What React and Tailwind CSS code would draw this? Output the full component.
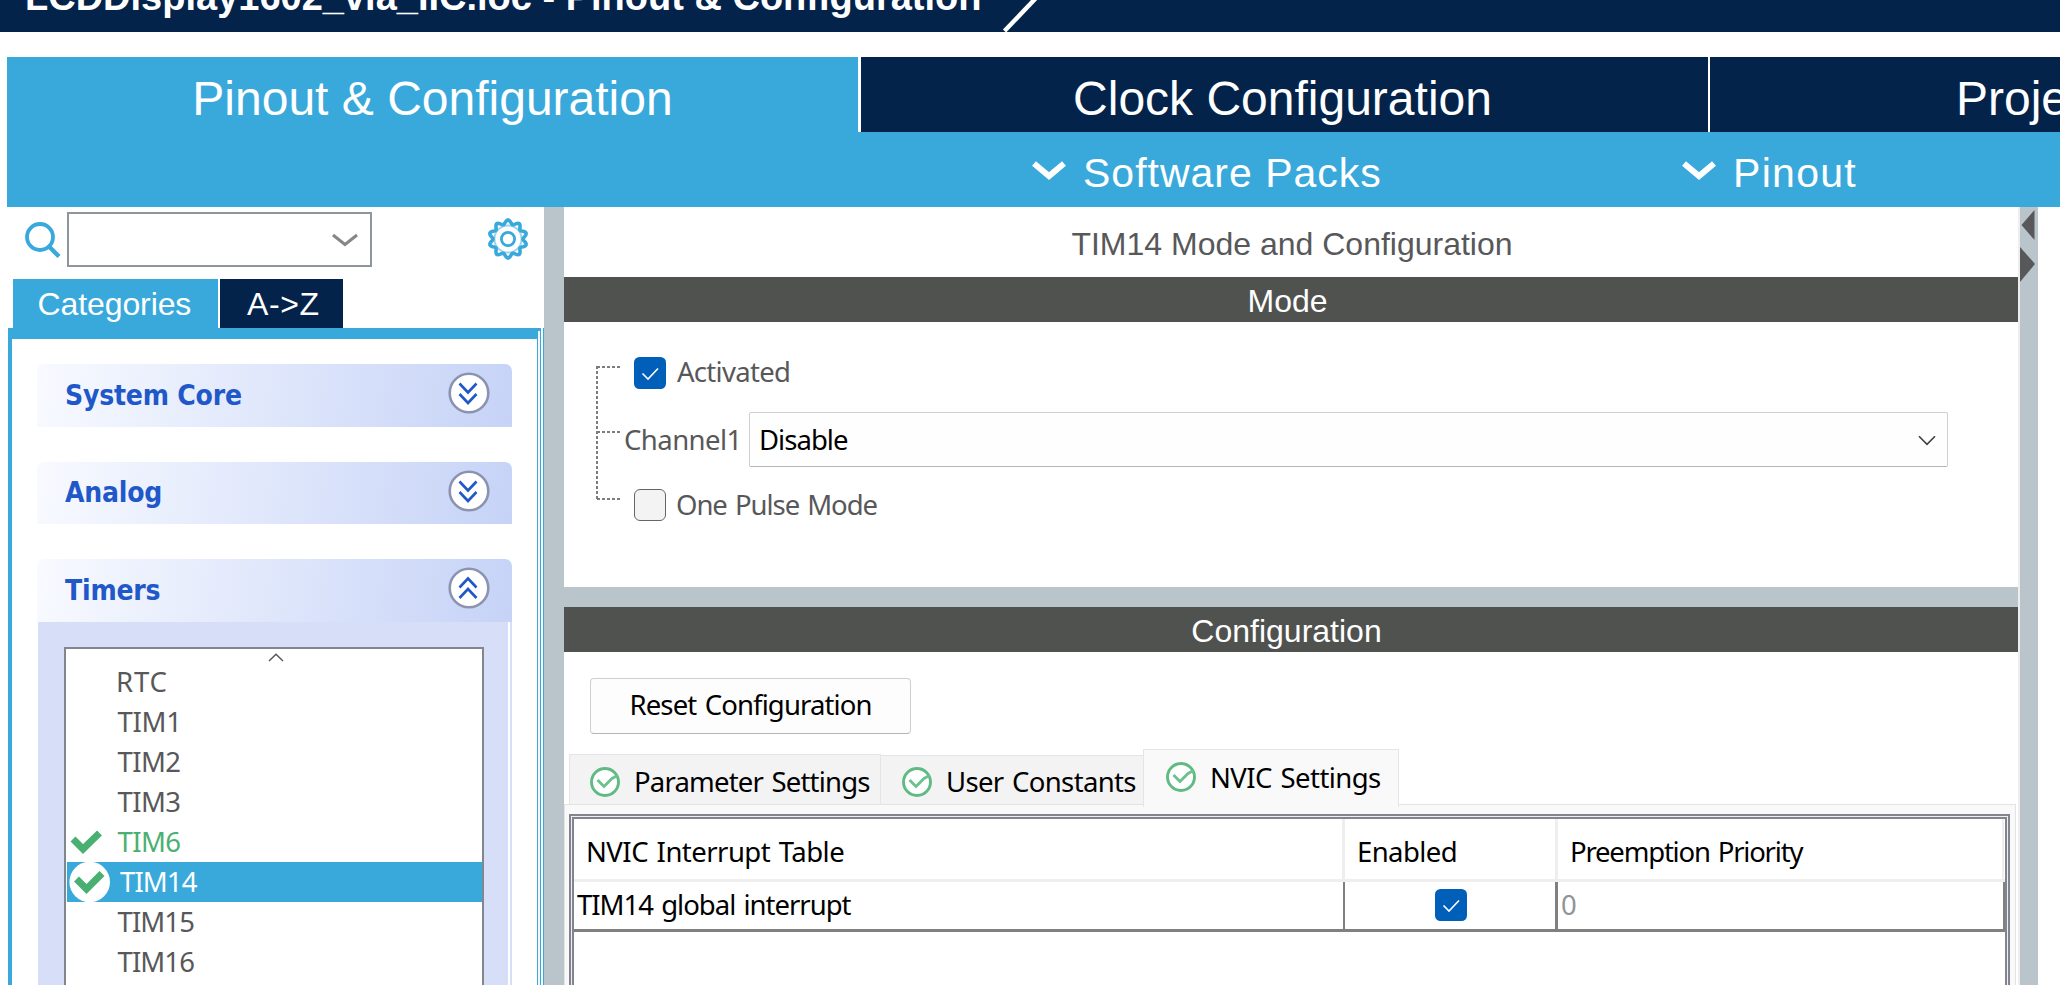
import React from "react";

const ARIAL = "font-['Liberation_Sans',Arial,sans-serif]";
const TAHOMA = "font-['Noto_Sans',Tahoma,sans-serif] text-[27.5px] [word-spacing:2px]";
const TAHOMA_BOLD = "font-['DejaVu_Sans_Condensed','DejaVu_Sans',sans-serif] text-[28px] font-bold -tracking-[0.2px]";

const timers = [
  { name: "RTC", text: "-ml-[1.5px] tracking-[0.8px]" },
  { name: "TIM1", text: "-tracking-[0.3px]" },
  { name: "TIM2", text: "-tracking-[0.6px]" },
  { name: "TIM3", text: "-tracking-[0.6px]" },
  { name: "TIM6", state: "ok", text: "-tracking-[0.6px]" },
  { name: "TIM14", state: "selected", text: "-tracking-[0.9px]" },
  { name: "TIM15", text: "-tracking-[0.9px]" },
  { name: "TIM16", text: "-tracking-[0.9px]" },
];

const gearPath =
  Array.from({ length: 121 }, (_, i) => {
    const a = (i / 120) * Math.PI * 2;
    const r = 17 + 2 * Math.cos(10 * a);
    return `${i ? "L" : "M"}${(21 + r * Math.sin(a)).toFixed(2)} ${(21 - r * Math.cos(a)).toFixed(2)}`;
  }).join("") + "Z";

function MenuChevron() {
  return (
    <svg className="mt-[3px]" width="34" height="20" viewBox="0 0 34 20" fill="none">
      <path d="M2 2.5L17 15L32 2.5" stroke="#fff" strokeWidth="6" />
    </svg>
  );
}

function SectionHeader({ title, open, className, textClass }) {
  return (
    <div
      className={`flex w-[475px] items-start justify-between rounded-t-[7px] bg-[linear-gradient(97deg,#f8faff,#c6d3f7)] pr-[22px] pl-[28px] ${className}`}
    >
      <span className={`${TAHOMA_BOLD} leading-[61px] text-[#2158c9] ${textClass}`}>{title}</span>
      <svg className="mt-[8px]" width="42" height="42" viewBox="0 0 42 42" fill="none">
        <circle cx="21" cy="21" r="19.3" fill="#fff" stroke="#8c93b0" strokeWidth="2.6" />
        {open ? (
          <path d="M11.5 20.5L20 11.5L28.5 20.5M11.5 31L20 22L28.5 31" stroke="#2158c9" strokeWidth="2.6" />
        ) : (
          <path d="M11.5 11.5L20 20.5L28.5 11.5M11.5 22L20 31L28.5 22" stroke="#2158c9" strokeWidth="2.6" />
        )}
      </svg>
    </div>
  );
}

function Checked() {
  return (
    <svg className="shrink-0" width="32" height="32" viewBox="0 0 32 32" fill="none">
      <rect width="32" height="32" rx="5.5" fill="#005fb8" />
      <path d="M8.5 16.5L14 22L24 11.5" stroke="#fff" strokeWidth="1.6" />
    </svg>
  );
}

function StatusIcon() {
  return (
    <svg className="shrink-0" width="30" height="30" viewBox="0 0 30 30" fill="none">
      <circle cx="15" cy="15" r="13.5" fill="#fff" stroke="#5fbb83" strokeWidth="2.9" />
      <path d="M7.5 13L14 19.5L22 11.5L27.5 8.5" stroke="#6cc18d" strokeWidth="2.8" />
    </svg>
  );
}

function TimerRow({ name, state, text }) {
  const selected = state === "selected";
  const color = selected ? "ml-[1px] bg-[#39a9dc] text-white" : state === "ok" ? "text-[#4ab071]" : "text-[#58585a]";
  return (
    <div className={`flex h-[40px] ${color}`}>
      <span className={`flex shrink-0 items-center ${selected ? "w-[53px] pl-[2px]" : "w-[51.5px] pl-[4px]"}`}>
        {selected && (
          <svg width="42" height="40" viewBox="0 0 42 40" fill="none">
            <circle cx="20.7" cy="20" r="20.3" fill="#fff" />
            <path d="M7.5 17L17.5 27L33 11.5" stroke="#4ab071" strokeWidth="7" />
          </svg>
        )}
        {state === "ok" && (
          <svg width="34" height="40" viewBox="0 0 34 40" fill="none">
            <path d="M3 17L13 27L29.5 11" stroke="#4ab071" strokeWidth="7" />
          </svg>
        )}
      </span>
      <span className={`${TAHOMA} leading-[40px] ${text}`}>{name}</span>
    </div>
  );
}

function Sidebar() {
  return (
    <div className="flex w-[544px] shrink-0 flex-col">
      <div className="flex h-[72px] shrink-0 items-start pt-[5px]">
        <svg className="mt-[8px] ml-[24px]" width="38" height="40" viewBox="0 0 38 40" fill="none" stroke="#39a9dc">
          <circle cx="16" cy="17" r="13" strokeWidth="3.8" />
          <path d="M25 26.5L35 36.5" strokeWidth="4.4" />
        </svg>
        <div className="ml-[5px] flex h-[55px] w-[305px] items-center justify-end border-2 border-[#8f959c] pr-[12px]">
          <svg className="mt-[1px]" width="26" height="14" viewBox="0 0 26 14" fill="none">
            <path d="M1 2L13 11.5L25 2" stroke="#868686" strokeWidth="3" />
          </svg>
        </div>
        <svg className="mt-[6px] ml-[114.5px]" width="42" height="42" viewBox="0 0 42 42" fill="none" stroke="#39a9dc">
          <path d={gearPath} strokeWidth="3.6" />
          <circle cx="21" cy="21" r="13.6" strokeWidth="2" opacity="0.5" />
          <circle cx="21" cy="21" r="6.6" strokeWidth="2.8" />
        </svg>
      </div>

      <div className={`ml-[13px] flex h-[49px] shrink-0 gap-[2px] text-[32px] text-white ${ARIAL}`}>
        <div className="w-[205px] bg-[#39a9dc] pl-[24.5px] leading-[50px] -tracking-[0.1px]">Categories</div>
        <div className="w-[123px] bg-[#03234b] pl-[27px] leading-[50px] tracking-[0.6px]">A-&gt;Z</div>
      </div>

      <div className="flex grow pl-[8px]">
        <div className="flex w-[529px] flex-col border-t-[11px] border-l-[4px] border-[#39a9dc] pt-[25px] pl-[25px]">
          <SectionHeader title="System Core" className="h-[63px]" textClass="pt-[1px]" />
          <SectionHeader title="Analog" className="mt-[35px] h-[62px]" />
          <SectionHeader title="Timers" open className="mt-[35px] h-[63px]" textClass="pt-[1px]" />
          <div className="ml-[1px] flex w-[474px] grow bg-[#d6def8]">
            <div className="mt-[25px] ml-[26px] w-[420px] border-x-2 border-t-2 border-[#82868f] bg-white">
              <div className="flex h-[13px] items-end justify-center pl-[3px]">
                <svg width="16" height="9" viewBox="0 0 16 9" fill="none">
                  <path d="M1 8L8 1.2L15 8" stroke="#58585a" strokeWidth="1.5" />
                </svg>
              </div>
              {timers.map((t) => (
                <TimerRow key={t.name} {...t} />
              ))}
            </div>
            <div className="ml-[24px] w-[2px] bg-white" />
          </div>
        </div>
        <div className="flex w-[7px] justify-between">
          <div className="w-[4px] border-x border-t-[3px] border-[#39a9dc] bg-[#f3f7fa]" />
          <div className="w-px bg-[#39a9dc]" />
        </div>
      </div>
    </div>
  );
}

function ModePanel() {
  return (
    <div className="flex h-[265px] shrink-0 pl-[32px]">
      <svg className="shrink-0" width="25" height="200" viewBox="0 0 25 200" fill="none" stroke="#7c7c7c" strokeWidth="2">
        <path d="M1 44V178" strokeDasharray="3 2" />
        <path d="M1 45H24M1 110H24M1 177H24" strokeDasharray="3 2" />
      </svg>
      <div className={`flex flex-col pt-[35px] pl-[2px] text-[#58585a] ${TAHOMA}`}>
        <div className="flex h-[32px] pl-[11px]">
          <Checked />
          <span className="ml-[11px] leading-[30px] -tracking-[0.7px]">Activated</span>
        </div>
        <div className="mt-[23px] flex h-[55px]">
          <span className="w-[126px] pl-[1px] leading-[56px] -tracking-[0.55px]">Channel1</span>
          <div className="flex w-[1199px] items-center justify-between rounded-[2px] border border-[#cfcfcf] border-b-[#b5b5b5] bg-[#fefefe] pr-[11.5px] pl-[9px] text-black">
            <span className="leading-[53px] -tracking-[0.97px]">Disable</span>
            <svg className="mt-[1px]" width="18" height="11" viewBox="0 0 18 11" fill="none">
              <path d="M1 1.2L9 9.4L17 1.2" stroke="#404040" strokeWidth="1.6" />
            </svg>
          </div>
        </div>
        <div className="mt-[22px] flex h-[32px] pl-[11px]">
          <span className="size-[32px] shrink-0 rounded-[6px] border border-[#666666] bg-[#f3f3f3]" />
          <span className="ml-[10px] leading-[32px] -tracking-[1.05px]">One Pulse Mode</span>
        </div>
      </div>
    </div>
  );
}

function NvicTable() {
  return (
    <div className="ml-[4px] flex w-[1441px] grow flex-col border-x-2 border-t-2 border-[#82858f] bg-[#eeeef3] px-px pt-px">
      <div className={`grow border-x-2 border-t-2 border-[#82858f] bg-white text-black ${TAHOMA}`}>
        <div className="flex h-[63px] border-b-[3px] border-[#eeeeee] leading-[66px]">
          <div className="h-[60px] w-[771px] border-r-[3px] border-[#eeeeee] pl-[12px] -tracking-[0.53px]">
            NVIC Interrupt Table
          </div>
          <div className="h-[60px] w-[213px] border-r-[3px] border-[#eeeeee] pl-[12px] -tracking-[0.6px]">Enabled</div>
          <div className="h-[60px] w-[446px] border-r-2 border-[#eeeeee] pl-[12px] -tracking-[1.2px]">
            Preemption Priority
          </div>
        </div>
        <div className="flex h-[50px] border-b-[3px] border-[#808080] leading-[46px]">
          <div className="w-[771px] border-r-2 border-[#808080] pl-[3px] -tracking-[1px]">TIM14 global interrupt</div>
          <div className="flex w-[213px] justify-center border-r-[3px] border-[#808080] pt-[7px] pl-[2px]">
            <Checked />
          </div>
          <div className="w-[447px] border-r-2 border-[#808080] pl-[3px] text-[#8f9498]">0</div>
        </div>
      </div>
    </div>
  );
}

function ConfigurationPanel() {
  return (
    <div className="flex grow flex-col text-black">
      <div
        className={`mt-[26px] ml-[26px] h-[56px] w-[321px] shrink-0 rounded-[4px] border border-[#cfcfcf] border-b-[#b5b5b5] bg-[#fdfdfd] pl-[38.5px] leading-[52px] -tracking-[0.87px] ${TAHOMA}`}
      >
        Reset Configuration
      </div>
      <div className={`mt-[15px] ml-[5px] flex h-[55px] shrink-0 items-end ${TAHOMA}`}>
        <div className="flex h-[50px] w-[312px] border-x border-t border-[#e5e5e5] bg-[#f3f3f3] pt-[12px] pl-[20px]">
          <StatusIcon />
          <span className="ml-[14px] leading-[30px] -tracking-[0.8px]">Parameter Settings</span>
        </div>
        <div className="flex h-[49px] w-[262px] border-t border-[#e5e5e5] bg-[#f3f3f3] pt-[11px] pl-[21px]">
          <StatusIcon />
          <span className="ml-[14px] leading-[30px] -tracking-[0.65px]">User Constants</span>
        </div>
        <div className="z-10 -mb-[3px] flex h-[58px] w-[256px] border-x border-t border-[#e5e5e5] bg-[#f9f9f9] pt-[12px] pl-[22px]">
          <StatusIcon />
          <span className="ml-[14px] leading-[31px] -tracking-[0.55px]">NVIC Settings</span>
        </div>
      </div>
      <div className="flex w-[1452px] grow flex-col border-x border-t border-[#e3e3e3] bg-[#f9f9f9] pt-[9px]">
        <NvicTable />
      </div>
    </div>
  );
}

export default function App() {
  return (
    <div className={`flex h-[985px] w-[2060px] flex-col overflow-hidden bg-white ${ARIAL}`}>
      <div className="flex h-[32px] shrink-0 items-start overflow-hidden bg-[#03234b] pl-[25px]">
        <span className="-mt-[23px] w-[977px] shrink-0 text-[38px] leading-[40px] font-bold whitespace-nowrap text-white">
          LCDDisplay1602_via_IIC.ioc - Pinout &amp; Configuration
        </span>
        <svg width="36" height="32" viewBox="0 0 36 32" fill="none">
          <path d="M2.5 31L34 -2" stroke="#fff" strokeWidth="4.4" />
        </svg>
      </div>

      <div className="mt-[25px] ml-[7px] flex h-[75px] shrink-0 text-[48px] whitespace-nowrap text-white">
        <div className="w-[851px] bg-[#39a9dc] text-center leading-[84px]">Pinout &amp; Configuration</div>
        <div className="ml-[3px] w-[847px] bg-[#03234b] pr-[4px] text-center leading-[84px]">Clock Configuration</div>
        <div className="ml-[2px] w-[350px] overflow-hidden bg-[#03234b] pl-[246px] leading-[84px]">Proje</div>
      </div>
      <div className="ml-[7px] flex h-[75px] shrink-0 items-center bg-[#39a9dc] text-[41px] text-white">
        <div className="ml-[1025px] flex w-[650px] items-center">
          <MenuChevron />
          <span className="ml-[17px] pt-[6px] leading-[70px] tracking-[1px]">Software Packs</span>
        </div>
        <div className="flex items-center">
          <MenuChevron />
          <span className="ml-[17px] pt-[6px] leading-[70px] tracking-[1.3px]">Pinout</span>
        </div>
      </div>

      <div className="flex grow">
        <Sidebar />
        <div className="w-[20px] shrink-0 bg-[#b9c4cb]" />
        <div className="flex w-[1454px] shrink-0 flex-col">
          <div className="h-[70px] shrink-0 pl-[2px] text-center text-[32px] leading-[75px] text-[#58585a]">
            TIM14 Mode and Configuration
          </div>
          <div className="h-[45px] shrink-0 bg-[#50524f] pr-[7px] text-center text-[32px] leading-[48px] text-white">Mode</div>
          <ModePanel />
          <div className="h-[20px] shrink-0 bg-[#b9c4cb]" />
          <div className="h-[45px] shrink-0 bg-[#50524f] pr-[9px] text-center text-[32px] leading-[48px] text-white">
            Configuration
          </div>
          <ConfigurationPanel />
        </div>
        <div className="w-[20px] shrink-0 border-l-2 border-[#eeeeee] bg-[#b9c4cb]">
          <svg width="18" height="80" viewBox="0 0 18 80" fill="#58585a">
            <path d="M14.5 3V33L1.5 18Z" />
            <path d="M0 40V75L15 57Z" />
          </svg>
        </div>
      </div>
    </div>
  );
}
